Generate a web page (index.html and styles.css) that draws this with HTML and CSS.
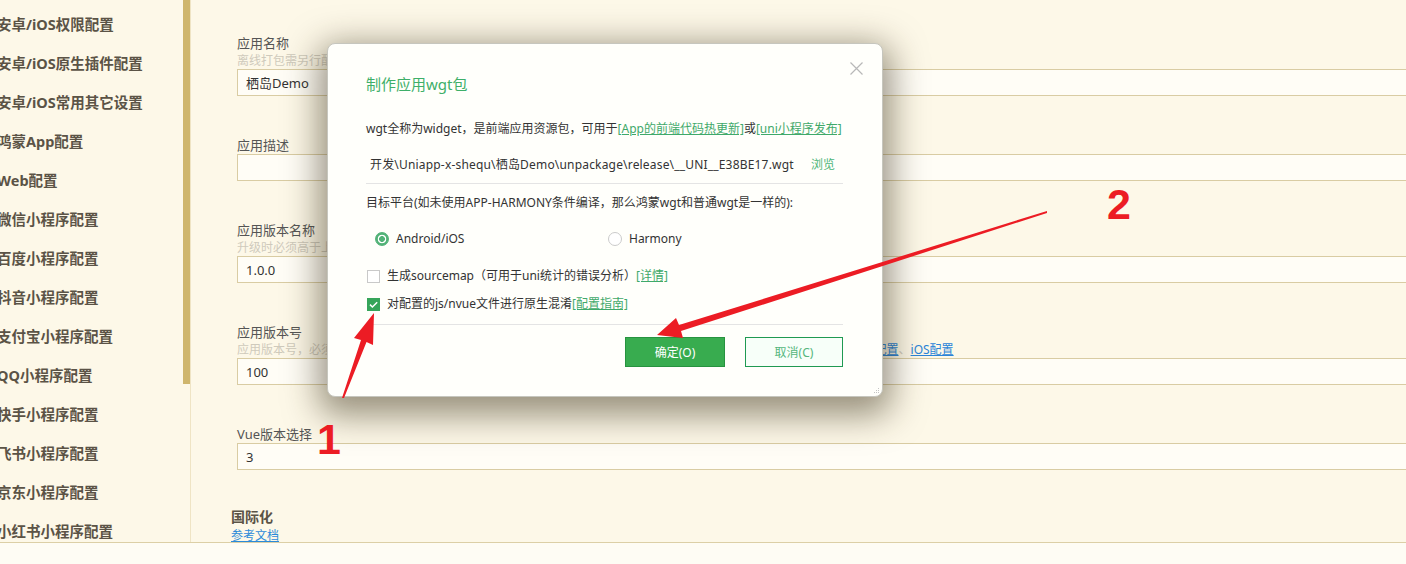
FILE: index.html
```html
<!DOCTYPE html>
<html lang="zh">
<head>
    <meta charset="UTF-8">
    <meta name="viewport" content="width=device-width, initial-scale=1.0">
    <title>manifest.json - 制作应用wgt包</title>
    <link rel="stylesheet" href="styles.css">
</head>
<body>
    <div class="app">
        <div class="workspace">
            <aside class="sidebar">
                <ul class="nav">
                    <li>安卓/iOS权限配置</li>
                    <li>安卓/iOS原生插件配置</li>
                    <li>安卓/iOS常用其它设置</li>
                    <li>鸿蒙App配置</li>
                    <li>Web配置</li>
                    <li>微信小程序配置</li>
                    <li>百度小程序配置</li>
                    <li>抖音小程序配置</li>
                    <li>支付宝小程序配置</li>
                    <li>QQ小程序配置</li>
                    <li>快手小程序配置</li>
                    <li>飞书小程序配置</li>
                    <li>京东小程序配置</li>
                    <li>小红书小程序配置</li>
                </ul>
            </aside>
            <div class="scrollbar"><div class="thumb"></div></div>

            <main class="form">
                <div class="field">
                    <label for="appName">应用名称</label>
                    <p class="hint">离线打包需另行配置，详见原生工程配置说明</p>
                    <input type="text" id="appName" value="栖岛Demo" readonly>
                </div>
                <div class="field">
                    <label for="appDesc">应用描述</label>
                    <input type="text" id="appDesc" value="" readonly>
                </div>
                <div class="field">
                    <label for="versionName">应用版本名称</label>
                    <p class="hint">升级时必须高于上一次设置的值</p>
                    <input type="text" id="versionName" value="1.0.0" readonly>
                </div>
                <div class="field">
                    <label for="versionCode">应用版本号</label>
                    <p class="hint">应用版本号，必须是整数，取值范围1 ~ 2147483647；升级时必须高于上一次设置的值。离线打包需另行配置：<a href="#">Android配置</a>、<a href="#">iOS配置</a></p>
                    <input type="text" id="versionCode" value="100" readonly>
                </div>
                <div class="field">
                    <label for="vueVersion">Vue版本选择</label>
                    <input type="text" id="vueVersion" value="3" readonly>
                </div>

                <h2 class="section-title">国际化</h2>
                <a class="doc-link" href="#">参考文档</a>
            </main>
        </div>
        <footer class="statusbar"></footer>

        <!-- 制作wgt包 弹窗 -->
        <div class="dialog">
            <svg class="dialog-close" width="13" height="13" viewBox="0 0 13 13">
                <path d="M0.5 0.5L12.5 12.5M12.5 0.5L0.5 12.5" stroke="#b8b8b8" stroke-width="1.2" fill="none"/>
            </svg>

            <h1 class="dialog-title">制作应用wgt包</h1>
            <p class="intro">wgt全称为widget，是前端应用资源包，可用于<a href="#">[App的前端代码热更新]</a>或<a href="#">[uni小程序发布]</a></p>

            <div class="path-row">
                <span class="path">开发\Uniapp-x-shequ\栖岛Demo\unpackage\release\__UNI__E38BE17.wgt</span>
                <span class="browse">浏览</span>
            </div>

            <p class="target">目标平台(如未使用APP-HARMONY条件编译，那么鸿蒙wgt和普通wgt是一样的):</p>

            <div class="platforms">
                <div class="radio-item"><span class="radio checked"></span>Android/iOS</div>
                <div class="radio-item"><span class="radio"></span>Harmony</div>
            </div>

            <div class="check-row first">
                <span class="checkbox"></span>
                <span>生成sourcemap（可用于uni统计的错误分析）<a href="#">[详情]</a></span>
            </div>
            <div class="check-row">
                <span class="checkbox checked">
                    <svg width="13" height="13" viewBox="0 0 13 13"><path d="M3 6.6L5.4 9L10.2 4.2" stroke="#fff" stroke-width="1.5" fill="none"/></svg>
                </span>
                <span>对配置的js/nvue文件进行原生混淆<a href="#">[配置指南]</a></span>
            </div>

            <div class="dialog-actions">
                <button class="btn btn-primary">确定(O)</button>
                <button class="btn btn-default">取消(C)</button>
            </div>

            <svg class="grip" width="7" height="7" viewBox="0 0 7 7">
                <rect x="5" y="1" width="1" height="1" fill="#c4c4c4"/>
                <rect x="3" y="3" width="1" height="1" fill="#c4c4c4"/>
                <rect x="5" y="3" width="1" height="1" fill="#c4c4c4"/>
                <rect x="1" y="5" width="1" height="1" fill="#c4c4c4"/>
                <rect x="3" y="5" width="1" height="1" fill="#c4c4c4"/>
                <rect x="5" y="5" width="1" height="1" fill="#c4c4c4"/>
            </svg>
        </div>

        <!-- 标注箭头 -->
        <svg class="annotations" width="1406" height="564" viewBox="0 0 1406 564">
            <polygon points="374,313 373,345 366.5,342 344,398 342,398 361,340 354,338" fill="#ec1c24"/>
            <polygon points="657,335 683,338 681,331 1047,213 1047,211 679,325 676,318" fill="#ec1c24"/>
            <text x="329" y="454" text-anchor="middle" class="mark">1</text>
            <text x="1119" y="219" text-anchor="middle" class="mark">2</text>
        </svg>
    </div>
</body>
</html>
```

FILE: styles.css
```css
* {
    box-sizing: border-box;
}
body {
    margin: 0;
    font-family: "Noto Sans", "Noto Sans CJK SC", sans-serif;
    background-color: #fdf8e8;
    color: #333;
}
.app {
    position: relative;
    width: 1406px;
    height: 564px;
    overflow: hidden;
}
.workspace {
    display: flex;
    height: 542px;
}

/* 左侧导航 */
.sidebar {
    width: 183px;
    overflow: hidden;
}
.nav {
    list-style: none;
    margin: 0;
    padding: 5px 0 0;
}
.nav li {
    height: 39px;
    line-height: 39px;
    font-size: 14.5px;
    font-weight: bold;
    color: #5b5346;
    text-indent: -3px;
    white-space: nowrap;
}
.scrollbar {
    width: 8px;
    border-right: 1px solid #efe4c4;
}
.thumb {
    width: 7px;
    height: 384px;
    background-color: #cfb66d;
}

/* 表单 */
.form {
    flex: 1;
    padding: 35px 0 0 46px;
    overflow: hidden;
}
.field {
    margin-bottom: 41px;
}
.field label {
    display: block;
    font-size: 13px;
    line-height: 17px;
    color: #555;
}
.hint {
    margin: 0;
    font-size: 12px;
    line-height: 17px;
    color: #cfcabc;
    white-space: nowrap;
}
.hint a {
    color: #2a84d8;
}
.field input {
    display: block;
    width: calc(100% + 4px);
    height: 27px;
    padding: 0 8px;
    border: 1px solid #d9cca3;
    background-color: #fffdf6;
    font: 13px "Noto Sans", "Noto Sans CJK SC", sans-serif;
    color: #333;
    outline: none;
}
.section-title {
    margin: 0 0 4px -6px;
    font-size: 14px;
    line-height: 12px;
    font-weight: bold;
    color: #5b5346;
}
.doc-link {
    display: block;
    margin-left: -6px;
    font-size: 12px;
    line-height: 17px;
    color: #2b8ad9;
}
.statusbar {
    height: 22px;
    border-top: 1px solid #dccfa6;
    background-color: #fefcf4;
}

/* 弹窗 */
.dialog {
    position: absolute;
    left: 327px;
    top: 43px;
    width: 556px;
    height: 354px;
    padding: 30px 39px 0 38px;
    background-color: #fffffb;
    border: 1px solid #c6c6be;
    border-radius: 8px;
    box-shadow: 0 10px 34px 8px rgba(50, 40, 15, 0.5);
    font-size: 12px;
    line-height: 18px;
}
.dialog a {
    color: #3fa96a;
}
.dialog-close {
    position: absolute;
    right: 19px;
    top: 18px;
}
.dialog-title {
    margin: 0;
    font-size: 15px;
    line-height: 20px;
    font-weight: normal;
    color: #3eaf69;
}
.intro {
    margin: 26px 0 0;
    white-space: nowrap;
}
.path-row {
    display: flex;
    justify-content: space-between;
    margin-top: 18px;
    padding: 0 8px 9px 4px;
    border-bottom: 1px solid #e4e4e4;
    white-space: nowrap;
}
.path {
    letter-spacing: 0.18px;
}
.browse {
    color: #4cb577;
}
.target {
    margin: 10px 0 0;
    white-space: nowrap;
}
.platforms {
    display: flex;
    margin-top: 18px;
    padding-left: 9px;
}
.radio-item {
    display: flex;
    align-items: center;
    gap: 7px;
    width: 233px;
}
.radio {
    width: 14px;
    height: 14px;
    border-radius: 50%;
    border: 1px solid #cbcbcb;
    background-color: #fff;
}
.radio.checked {
    border-color: #52b277;
    background: radial-gradient(circle, #52b277 0 2.6px, #fff 3.2px 4px, #52b277 4.6px);
}
.check-row {
    display: flex;
    align-items: center;
    gap: 7px;
    margin-top: 10px;
    padding-left: 1px;
    white-space: nowrap;
}
.check-row.first {
    margin-top: 19px;
}
.checkbox {
    width: 13px;
    height: 13px;
    border: 1px solid #c9c9c9;
    background-color: #fff;
}
.checkbox.checked {
    border: none;
    background-color: #36a55a;
}
.checkbox svg {
    display: block;
}
.dialog-actions {
    display: flex;
    justify-content: flex-end;
    gap: 20px;
    margin-top: 11px;
    padding-top: 12px;
    border-top: 1px solid #e4e4e4;
}
.btn {
    height: 30px;
    font: 12px "Noto Sans", "Noto Sans CJK SC", sans-serif;
    cursor: pointer;
}
.btn-primary {
    width: 100px;
    background-color: #38ac4f;
    border: 1px solid #27933f;
    color: #fff;
}
.btn-default {
    width: 98px;
    background-color: #f7fff9;
    border: 1px solid #1f9a52;
    color: #55b67c;
}
.grip {
    position: absolute;
    right: 2px;
    bottom: 2px;
}

/* 标注 */
.annotations {
    position: absolute;
    left: 0;
    top: 0;
    pointer-events: none;
}
.mark {
    font-family: "Liberation Sans", Arial, sans-serif;
    font-size: 43px;
    font-weight: bold;
    fill: #ec1c24;
}
```
